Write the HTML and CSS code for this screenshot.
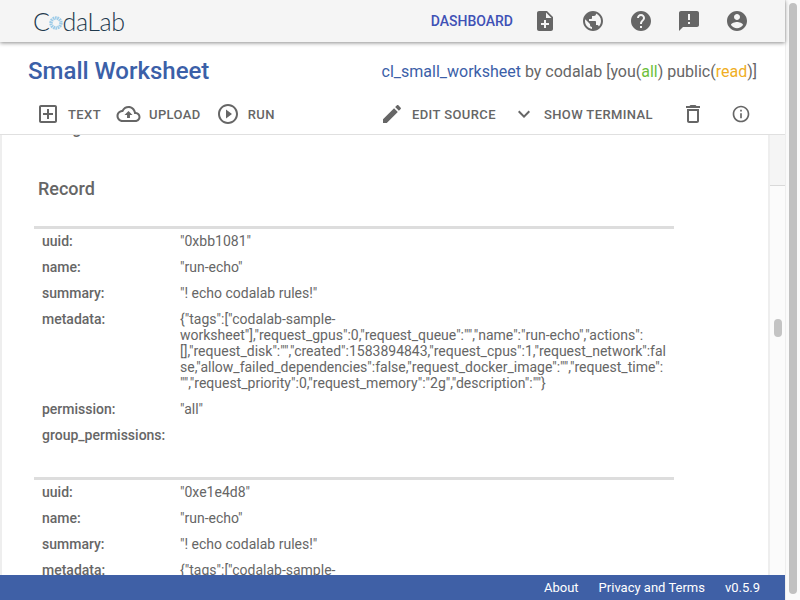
FILE: index.html
```html
<!DOCTYPE html>
<html>
	<head>
		<title>Small Worksheet</title>
		<link rel="stylesheet" href="styles.css">
	</head>
	<body>
		<div class="app">
			<div class="navBar">
				<div class="logo">C<svg class="logoMark" width="14" height="14" viewBox="0 0 14 14"><circle cx="7" cy="7" r="5" fill="none" stroke="#9ccbe8" stroke-width="3.4" stroke-dasharray="1.6 .6"/></svg>daLab</div>
				<div class="navItems">
					<span class="navLink">DASHBOARD</span>
					<svg class="navIcon" viewBox="0 0 24 24"><path d="M14 2H6c-1.1 0-2 .9-2 2v16c0 1.1.9 2 2 2h12c1.1 0 2-.9 2-2V8l-6-6zm2 14h-3v3h-2v-3H8v-2h3v-3h2v3h3v2zm-3-7V3.5L18.5 9H13z"/></svg>
					<svg class="navIcon" viewBox="0 0 24 24"><path d="M12 2C6.48 2 2 6.48 2 12s4.48 10 10 10 10-4.480 10-10S17.520 2 12 2zm-1 17.930c-3.950-.490-7-3.850-7-7.930 0-.620.080-1.210.210-1.790L9 15v1c0 1.100.9 2 2 2v1.930zm6.900-2.540c-.260-.810-1-1.390-1.900-1.390h-1v-3c0-.550-.450-1-1-1H8v-2h2c.550 0 1-.450 1-1V7h2c1.100 0 2-.9 2-2v-.410c2.930 1.190 5 4.060 5 7.410 0 2.080-.8 3.970-2.100 5.390z"/></svg>
					<svg class="navIcon" viewBox="0 0 24 24"><path d="M12 2C6.48 2 2 6.48 2 12s4.48 10 10 10 10-4.480 10-10S17.520 2 12 2zm1 17h-2v-2h2v2zm2.070-7.750l-.9.920C13.450 12.900 13 13.500 13 15h-2v-.5c0-1.100.45-2.100 1.170-2.830l1.240-1.260c.37-.36.590-.86.590-1.410 0-1.100-.9-2-2-2s-2 .9-2 2H8c0-2.210 1.790-4 4-4s4 1.790 4 4c0 .880-.360 1.680-.930 2.250z"/></svg>
					<svg class="navIcon" viewBox="0 0 24 24"><path d="M20 2H4c-1.100 0-1.990.9-1.990 2L2 22l4-4h14c1.100 0 2-.9 2-2V4c0-1.100-.9-2-2-2zm-7 9h-2V5h2v6zm0 4h-2v-2h2v2z"/></svg>
					<svg class="navIcon" viewBox="0 0 24 24"><path d="M12 2C6.480 2 2 6.480 2 12s4.480 10 10 10 10-4.480 10-10S17.520 2 12 2zm0 3c1.660 0 3 1.340 3 3s-1.340 3-3 3-3-1.340-3-3 1.340-3 3-3zm0 14.200c-2.500 0-4.710-1.280-6-3.220.030-1.990 4-3.080 6-3.080 1.990 0 5.970 1.090 6 3.080-1.290 1.940-3.500 3.220-6 3.220z"/></svg>
				</div>
			</div>

			<div class="titleBar">
				<h1 class="sheetTitle">Small Worksheet</h1>
				<p class="sheetInfo"><span class="blue">cl_small_worksheet</span> by codalab [you(<span class="green">all</span>) public(<span class="orange">read</span>)]</p>
			</div>

			<div class="toolBar">
				<div class="toolGroup">
					<span class="toolBtn btnText">
						<svg class="toolIcon" viewBox="0 0 24 24"><path d="M19 3H5c-1.110 0-2 .9-2 2v14c0 1.100.890 2 2 2h14c1.100 0 2-.9 2-2V5c0-1.100-.9-2-2-2zm0 16H5V5h14v14zm-8-2h2v-4h4v-2h-4V7h-2v4H7v2h4z"/></svg>
						TEXT
					</span>
					<span class="toolBtn btnUpload">
						<svg class="toolIcon cloud" viewBox="0 0 24 24"><path d="M19.350 10.040C18.670 6.590 15.640 4 12 4 9.110 4 6.600 5.640 5.350 8.040 2.340 8.360 0 10.910 0 14c0 3.310 2.690 6 6 6h13c2.760 0 5-2.240 5-5 0-2.640-2.050-4.780-4.650-4.960zM19 18H6c-2.210 0-4-1.790-4-4 0-2.050 1.530-3.760 3.560-3.970l1.070-.110.500-.950C8.080 7.140 9.940 6 12 6c2.620 0 4.880 1.860 5.390 4.430l.300 1.500 1.530.110c1.560.100 2.780 1.410 2.780 2.960 0 1.650-1.350 3-3 3zM8 13h2.550v3h2.900v-3H16l-4-4z"/></svg>
						UPLOAD
					</span>
					<span class="toolBtn btnRun">
						<svg class="toolIcon" viewBox="0 0 24 24"><path d="M10 16.500l6-4.500-6-4.500v9zM12 2C6.480 2 2 6.480 2 12s4.480 10 10 10 10-4.480 10-10S17.520 2 12 2zm0 18c-4.410 0-8-3.590-8-8s3.590-8 8-8 8 3.590 8 8-3.590 8-8 8z"/></svg>
						RUN
					</span>
				</div>
				<div class="toolGroup">
					<span class="toolBtn btnEdit">
						<svg class="toolIcon" viewBox="0 0 24 24"><path d="M3 17.250V21h3.750L17.810 9.940l-3.750-3.750L3 17.250zM20.710 7.040c.390-.390.390-1.020 0-1.410l-2.340-2.340c-.390-.390-1.020-.390-1.410 0l-1.830 1.830 3.750 3.750 1.830-1.830z"/></svg>
						EDIT SOURCE
					</span>
					<span class="toolBtn btnTerminal">
						<svg class="toolIcon" viewBox="0 0 24 24"><path d="M7.410 8.590L12 13.170l4.590-4.580L18 10l-6 6-6-6 1.410-1.410z"/></svg>
						SHOW TERMINAL
					</span>
					<svg class="toolIcon btnTrash" viewBox="0 0 24 24"><path d="M6 19c0 1.100.9 2 2 2h8c1.100 0 2-.9 2-2V7H6v12zM8 9h8v10H8V9zm7.500-5l-1-1h-5l-1 1H5v2h14V4z"/></svg>
					<svg class="toolIcon btnInfo" viewBox="0 0 24 24"><path d="M11 7h2v2h-2zm0 4h2v6h-2zm1-9C6.480 2 2 6.480 2 12s4.480 10 10 10 10-4.480 10-10S17.520 2 12 2zm0 18c-4.410 0-8-3.590-8-8s3.590-8 8-8 8 3.590 8 8-3.590 8-8 8z"/></svg>
				</div>
			</div>

			<div class="content">
				<div class="sheet">
					<p class="clippedLine">Listing</p>
					<h2 class="recordTitle">Record</h2>

					<table class="record">
						<tr><td class="key">uuid:</td><td>"0xbb1081"</td></tr>
						<tr><td class="key">name:</td><td>"run-echo"</td></tr>
						<tr><td class="key">summary:</td><td>"! echo codalab rules!"</td></tr>
						<tr><td class="key">metadata:</td><td>{"tags":["codalab-sample-worksheet"],"request_gpus":0,"request_queue":"","name":"run-echo","actions":[],"request_disk":"","created":1583894843,"request_cpus":1,"request_network":false,"allow_failed_dependencies":false,"request_docker_image":"","request_time":"","request_priority":0,"request_memory":"2g","description":""}</td></tr>
						<tr><td class="key">permission:</td><td>"all"</td></tr>
						<tr><td class="key">group_permissions:</td><td></td></tr>
					</table>

					<table class="record">
						<tr><td class="key">uuid:</td><td>"0xe1e4d8"</td></tr>
						<tr><td class="key">name:</td><td>"run-echo"</td></tr>
						<tr><td class="key">summary:</td><td>"! echo codalab rules!"</td></tr>
						<tr><td class="key">metadata:</td><td>{"tags":["codalab-sample-</td></tr>
					</table>
				</div>
				<div class="innerScroll">
					<div class="innerTrackTop"></div>
					<div class="innerThumb"></div>
				</div>
			</div>

			<div class="footer">
				<span>About</span>
				<span>Privacy and Terms</span>
				<span>v0.5.9</span>
			</div>
		</div>
		<div class="outerScroll"><div class="outerThumb"></div></div>
	</body>
</html>
```

FILE: styles.css
```css
html, body {
	height: 100%;
	margin: 0;
	overflow: hidden;
}

body {
	display: flex;
	font-family: Roboto, "Liberation Sans", sans-serif;
	color: #666666;
	background-color: #ffffff;
}

.app {
	width: 785px;
	height: 600px;
	display: flex;
	flex-direction: column;
}

.navBar {
	height: 42px;
	flex: none;
	display: flex;
	justify-content: space-between;
	align-items: center;
	padding-left: 33px;
	padding-right: 36px;
	background-color: #f5f5f5;
	box-shadow: 0 1px 4px rgba(0, 0, 0, 0.45);
	position: relative;
}

.logo {
	font-family: Lato, sans-serif;
	font-weight: 300;
	font-size: 25px;
	letter-spacing: -0.4px;
	color: #1f3a4d;
	display: flex;
	align-items: center;
}

.logoMark {
	margin-left: -1px;
	margin-top: 3px;
}

.navItems {
	display: flex;
	align-items: center;
}

.navLink {
	font-size: 14px;
	font-weight: 500;
	color: #3f51b5;
	margin-right: 20px;
}

.navIcon {
	width: 24px;
	height: 24px;
	fill: #666666;
	margin-left: 24px;
}

.navLink + .navIcon {
	margin-left: 0;
}

.titleBar {
	height: 56px;
	flex: none;
	box-sizing: border-box;
	display: flex;
	justify-content: space-between;
	align-items: center;
	padding-top: 2px;
	padding-left: 28px;
	padding-right: 28px;
}

.sheetTitle {
	margin: 0;
	font-size: 24px;
	font-weight: 500;
	color: #3b60a8;
}

.sheetInfo {
	margin: 0;
	font-size: 16px;
	color: #666666;
}

.blue { color: #3b60a8; }
.green { color: #6cbf3c; }
.orange { color: #f0ae24; }

.toolBar {
	height: 37px;
	flex: none;
	display: flex;
	justify-content: space-between;
	align-items: center;
	padding-left: 36px;
	padding-right: 32px;
	padding-bottom: 4px;
	border-bottom: 1px solid #e0e0e0;
	box-sizing: border-box;
}

.toolGroup {
	display: flex;
	align-items: center;
}

.toolBtn {
	display: flex;
	align-items: center;
	gap: 8px;
	font-size: 13px;
	font-weight: 500;
	letter-spacing: 0.4px;
	color: #666666;
}

.toolIcon {
	width: 24px;
	height: 24px;
	fill: #666666;
}

.cloud {
	width: 25px;
}

.btnText { margin-right: 15px; }
.btnUpload { margin-right: 15px; }
.btnEdit { margin-right: 16px; }
.btnTerminal { margin-right: 28px; }
.btnTrash { margin-right: 26px; }

.btnInfo {
	width: 20px;
	height: 20px;
	margin-right: 2px;
}

.content {
	flex: 1;
	min-height: 0;
	display: flex;
	overflow: hidden;
}

.sheet {
	flex: 1;
	min-width: 0;
	padding-left: 32px;
	border-left: 2px solid #eeeeee;
	overflow: hidden;
}

.clippedLine {
	margin: -16px 0 0 -1px;
	font-size: 16px;
	font-weight: 500;
	line-height: 19px;
}

.recordTitle {
	margin: 40px 0 0 4px;
	font-size: 18px;
	font-weight: 500;
	line-height: 21px;
}

.record {
	width: 640px;
	margin-top: 27px;
	margin-bottom: 28px;
	border-collapse: collapse;
	border-top: 3px solid #dddddd;
	font-size: 14px;
	line-height: 16px;
	table-layout: fixed;
}

.record + .record {
	margin-top: 0;
}

.record td {
	padding: 4px 8px 6px 0;
	vertical-align: top;
	word-break: break-word;
}

.record td.key {
	width: 130px;
	padding-left: 8px;
	font-weight: 500;
}

.innerScroll {
	width: 17px;
	flex: none;
	box-sizing: border-box;
	background-color: #fbfbfb;
	border-left: 2px solid #eeeeee;
	position: relative;
}

.innerTrackTop {
	height: 50px;
	background-color: #f5f5f5;
	border-bottom: 1px solid #d9d9d9;
}

.innerThumb {
	position: absolute;
	left: 4px;
	top: 184px;
	width: 8px;
	height: 18px;
	border-radius: 4px;
	background-color: #c4c4c4;
}

.footer {
	height: 25px;
	flex: none;
	display: flex;
	justify-content: flex-end;
	align-items: center;
	gap: 20px;
	padding-right: 25px;
	background-color: #3f60a6;
	color: #ffffff;
	font-size: 13px;
	position: relative;
}

.outerScroll {
	width: 15px;
	height: 600px;
	flex: none;
	box-sizing: border-box;
	padding: 3px 3px 6px 3px;
	background-color: #fafafa;
	border-left: 1px solid #eeeeee;
}

.outerThumb {
	height: 100%;
	border-radius: 4px;
	background-color: #c1c1c1;
}
```
